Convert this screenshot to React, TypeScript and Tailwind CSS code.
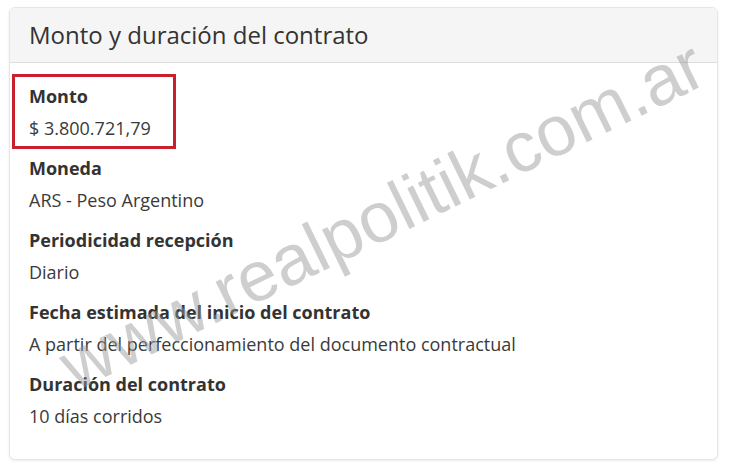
const items = [
  { label: "Monto", value: "$ 3.800.721,79", highlight: true },
  { label: "Moneda", value: "ARS - Peso Argentino" },
  { label: "Periodicidad recepción", value: "Diario" },
  { label: "Fecha estimada del inicio del contrato", value: "A partir del perfeccionamiento del documento contractual" },
  { label: "Duración del contrato", value: "10 días corridos" },
];

export default function App() {
  return (
    <div className="relative h-[469px] w-[730px] overflow-hidden bg-white pl-[9px] pt-[7px] font-['Open_Sans',sans-serif] text-[#333]">
      <section className="h-[453px] w-[709px] overflow-hidden rounded-[6px] border border-[#e6e6e6] bg-white shadow-[0_1px_3px_rgba(0,0,0,0.08)]">
        <header className="flex h-[55px] items-center border-b border-[#dedede] bg-[#f5f5f5] pl-[19px]">
          <h2 className="text-[24px] leading-none text-[#333]">Monto y duración del contrato</h2>
        </header>

        <div className="flex flex-col gap-2 px-[19px] pt-[11px]">
          {items.map((item) =>
            item.highlight ? (
              <div
                key={item.label}
                className="-ml-[17px] mb-[-5px] w-[164px] border-[3px] border-[#c9202e] pb-[2px] pl-[14px] pt-[3px]"
              >
                <p className="text-[18px] font-bold leading-[32px]">{item.label}</p>
                <p className="text-[18px] leading-[32px] text-[#3a3a3a]">{item.value}</p>
              </div>
            ) : (
              <div key={item.label}>
                <p className="text-[18px] font-bold leading-[32px]">{item.label}</p>
                <p className="text-[18px] leading-[32px] text-[#3a3a3a]">{item.value}</p>
              </div>
            )
          )}
        </div>
      </section>

      <div className="pointer-events-none absolute left-[382px] top-[215px] -translate-x-1/2 -translate-y-1/2 -rotate-[26deg] whitespace-nowrap font-['Liberation_Sans',Arial,sans-serif] text-[71px] leading-none text-[rgba(150,150,150,0.47)]">
        www.realpolitik.com.ar
      </div>
    </div>
  );
}
